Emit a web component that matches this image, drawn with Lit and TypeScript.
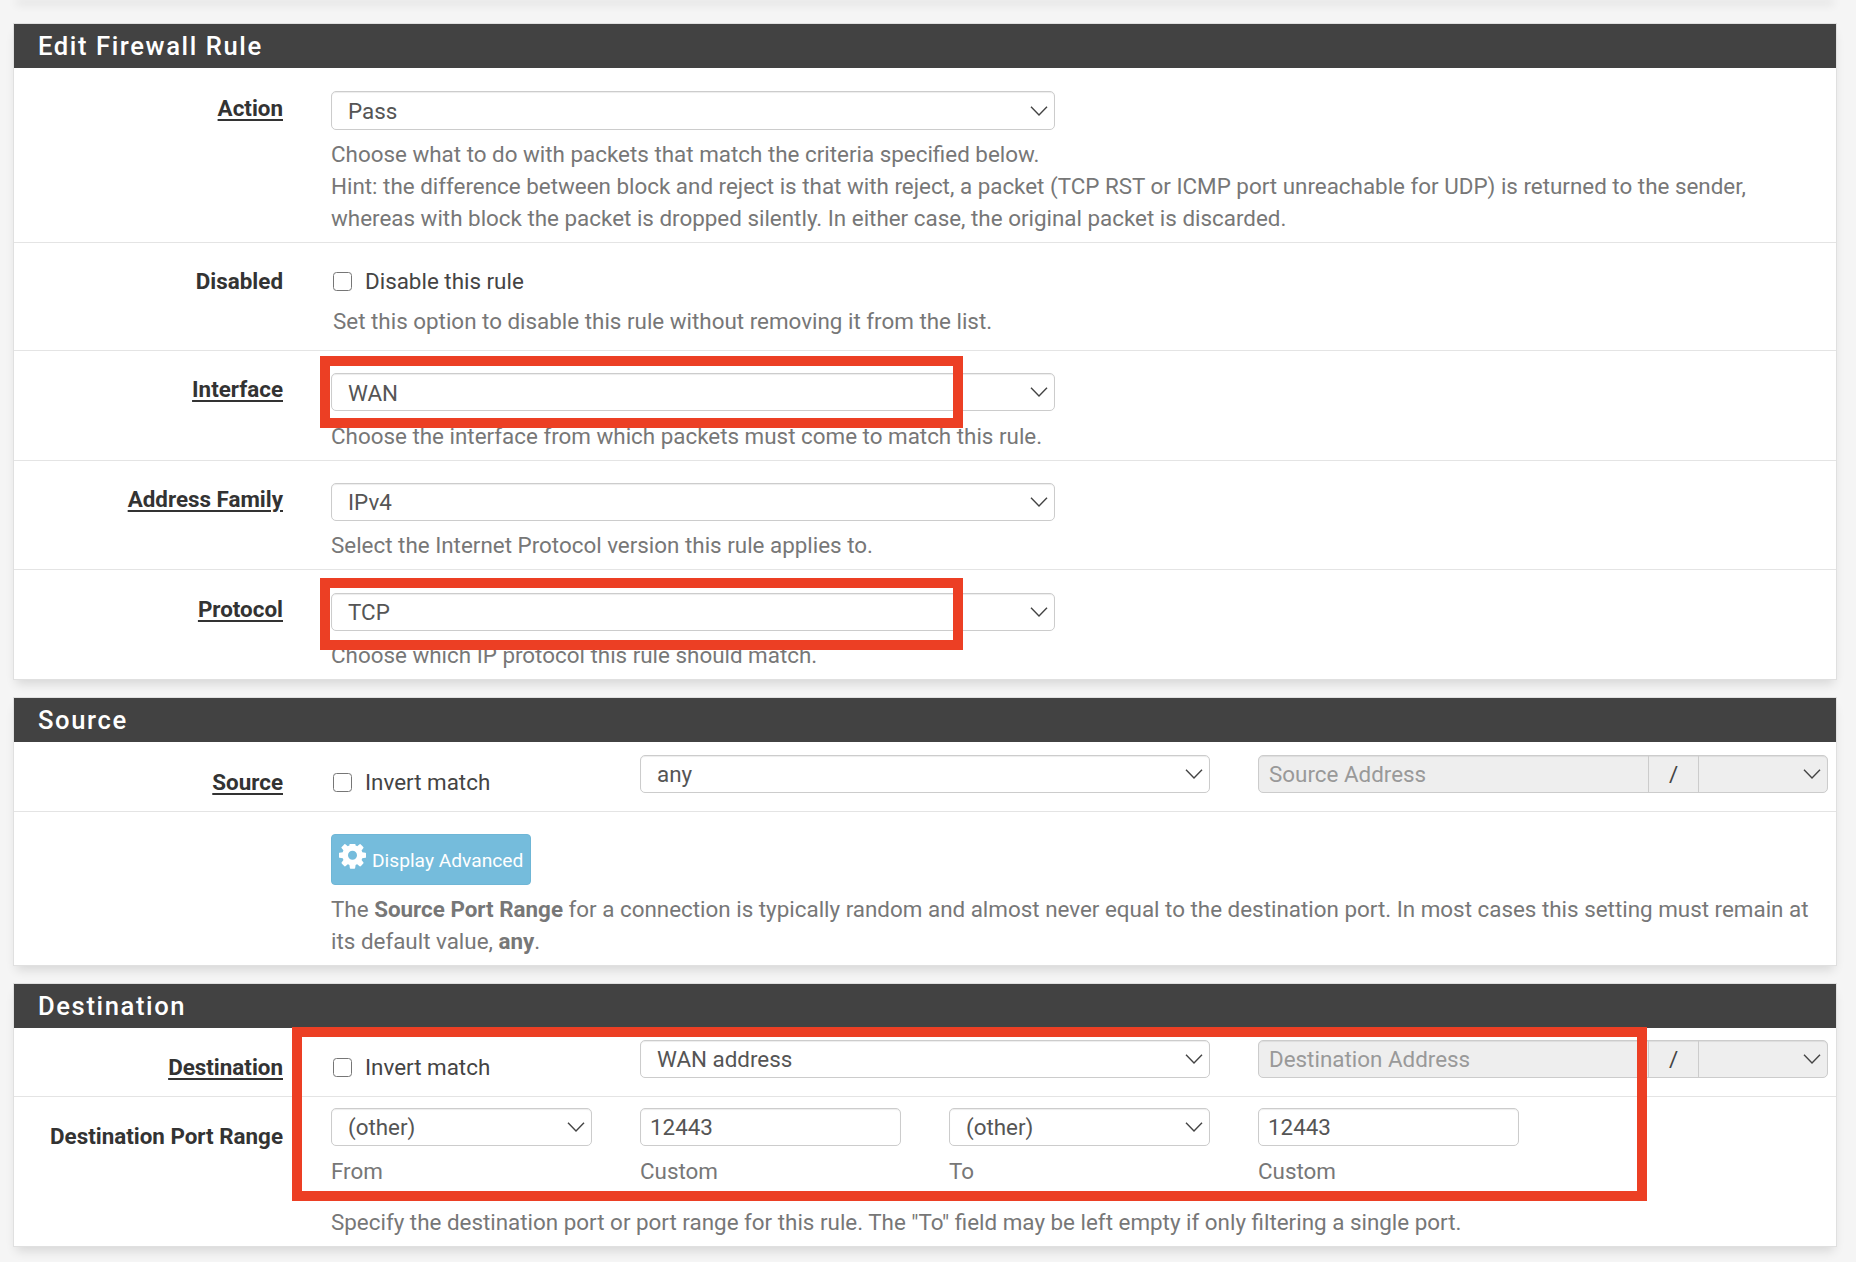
import { LitElement, html, css, svg } from "lit";
import { customElement } from "lit/decorators.js";

const chevron = html`<svg class="chev" viewBox="0 0 18 10" aria-hidden="true"><path d="M1 .8 L9 9 L17 .8" fill="none" stroke="#444" stroke-width="1.4"/></svg>`;
const gear = svg`<path fill-rule="evenodd" d="M1024 640q0-106-75-181t-181-75-181 75-75 181 75 181 181 75 181-75 75-181zm512-109v222q0 12-8 23t-20 13l-185 28q-19 54-39 91 35 50 107 138 10 12 10 25t-9 23q-27 37-99 108t-94 71q-12 0-26-9l-138-108q-44 23-91 38-16 136-29 186-7 28-36 28h-222q-14 0-24.5-8.5t-11.5-21.5l-28-184q-49-16-90-37l-141 107q-10 9-25 9-14 0-25-11-126-114-165-168-7-10-7-23 0-12 8-23 15-21 51-66.5t54-70.5q-27-50-41-99l-183-27q-13-2-21-12.5t-8-23.5v-222q0-12 8-23t19-13l186-28q14-46 39-92-40-57-107-138-10-12-10-24 0-10 9-23 26-36 98.5-107.5t94.5-71.5q13 0 26 10l138 107q44-23 91-38 16-136 29-186 7-28 36-28h222q14 0 24.5 8.5t11.5 21.5l28 184q49 16 90 37l142-107q9-9 24-9 13 0 25 10 129 119 165 170 7 8 7 22 0 12-8 23-15 21-51 66.5t-54 70.5q26 50 41 98l183 28q13 2 21 12.5t8 23.5z" fill="#fff"/>`;

@customElement("app-root")
export class AppRoot extends LitElement {
  static styles = css`
    :host {
      display: block;
      position: relative;
      width: 1856px;
      height: 1262px;
      overflow: hidden;
      background: #f5f5f5;
      font-family: Roboto, "Liberation Sans", sans-serif;
      font-size: 22.4px;
      line-height: 32px;
      color: #777;
    }
    .page { padding: 23px 19px 0 13px; display: flex; flex-direction: column; gap: 17px; }
    .ghost { height: 10px; margin-top: -33px; margin-bottom: 6px; background: #fff; box-shadow: 0 7px 10px -3px rgba(0,0,0,.12); }
    .panel { background: #fff; border: 1px solid #e0e0e0; box-shadow: 0 7px 10px -3px rgba(0,0,0,.12); }
    .head {
      height: 44px; background: #424242; color: #fff; padding-left: 24px;
      font-size: 25.6px; font-weight: 500; letter-spacing: 1.6px; line-height: 44px;
    }
    .row {
      display: grid; grid-template-columns: 269px 1fr; column-gap: 48px;
      padding-right: 8px; border-bottom: 1px solid #e4e4e4;
    }
    .row:last-child { border-bottom: 0; }
    .label { text-align: right; color: #333; font-weight: 700; }
    .label.u { text-decoration: underline; text-underline-offset: 3px; }
    .field { min-width: 0; }
    .select, .input {
      box-sizing: border-box; height: 38px; width: 100%; background: #fff;
      border: 1px solid #ccc; border-radius: 5px; color: #555; line-height: 36px;
      box-shadow: inset 0 1px 1px rgba(0,0,0,.075);
      display: flex; align-items: center; justify-content: space-between; white-space: nowrap;
    }
    .select { padding: 0 6px 0 16px; }
    .r-action .select span, .r-if .select span { padding-top: 1px; }
    .input { padding: 0 9px; }
    .chev { width: 18px; height: 10px; flex: none; }
    .wide { width: 724px; }
    .check { display: flex; align-items: center; gap: 13px; padding-left: 2px; color: #444; }
    .box { box-sizing: border-box; width: 19px; height: 19px; border: 1.5px solid #767676; border-radius: 3.5px; background: #fff; }
    .grid5 { display: grid; grid-template-columns: repeat(5, 261px); column-gap: 48px; }
    .span2 { grid-column: span 2; }
    .group { display: flex; height: 38px; box-sizing: border-box; border: 1px solid #ccc; border-radius: 5px; background: #eee; box-shadow: inset 0 1px 1px rgba(0,0,0,.075); }
    .group .ph { width: 390px; padding-left: 10px; box-sizing: border-box; color: #999; line-height: 36px; border-right: 1px solid #ccc; }
    .group .slash { width: 49px; text-align: center; color: #444; line-height: 36px; border-right: 1px solid #ccc; }
    .group .end { flex: 1; display: flex; align-items: center; justify-content: flex-end; padding-right: 6px; }
    .cap { color: #777; margin-top: 9px; }
    b { font-weight: 700; }
    .btn {
      display: inline-flex; box-sizing: border-box; width: 200px; height: 51px; background: #75bcdc;
      border: 1px solid #6fb6d6; border-radius: 4px; color: #fff; font-size: 19.2px; align-items: center;
      padding-left: 7px; gap: 6px; vertical-align: top;
    }
    .btn svg { width: 27px; height: 27px; flex: none; margin-top: -5px; }
    .btn span { line-height: 32px; margin-top: 2px; white-space: nowrap; }

    .r-action { padding: 23px 8px 8px 0; }
    .r-action .label { padding-top: 1px; }
    .r-action .select { height: 39px; }
    .r-action .help { margin-top: 8px; }
    .r-disabled { padding: 22px 8px 13px 0; }
    .r-disabled .help { margin-top: 8px; padding-left: 2px; }
    .r-if { padding: 22px 8px 8px 0; }
    .r-if .help { margin-top: 9px; }
    .r-af { padding: 22px 8px 8px 0; }
    .r-af .help, .r-pr .help { margin-top: 8px; }
    .r-pr { padding: 23px 8px 8px 0; }
    .r-src { padding: 13px 8px 13px 0; }
    .r-dst { padding: 12px 8px 13px 0; }
    .r-src .label, .r-src .check, .r-dst .label, .r-dst .check { padding-top: 11px; }
    .r-adv { padding: 22px 8px 8px 0; }
    .r-adv .help { margin-top: 8px; }
    .r-dp { padding: 11px 8px 8px 0; }
    .r-dp .label { padding-top: 12px; }
    .r-dp .help { margin-top: 19px; }

    .mark { position: absolute; box-sizing: border-box; border: 10px solid #ec3f24; pointer-events: none; }
    .m1 { left: 320px; top: 356px; width: 643px; height: 72px; }
    .m2 { left: 320px; top: 578px; width: 643px; height: 72px; }
    .m3 { left: 292px; top: 1027px; width: 1355px; height: 174px; }
  `;

  private sel(text: string) {
    return html`<div class="select"><span>${text}</span>${chevron}</div>`;
  }

  private group(ph: string) {
    return html`<div class="group span2"><div class="ph">${ph}</div><div class="slash">/</div><div class="end">${chevron}</div></div>`;
  }

  render() {
    return html`
      <div class="page">
        <div class="ghost"></div>
        <section class="panel">
          <div class="head">Edit Firewall Rule</div>
          <div class="row r-action">
            <div class="label u">Action</div>
            <div class="field">
              <div class="wide">${this.sel("Pass")}</div>
              <div class="help">Choose what to do with packets that match the criteria specified below.<br>Hint: the difference between block and reject is that with reject, a packet (TCP RST or ICMP port unreachable for UDP) is returned to the sender,<br>whereas with block the packet is dropped silently. In either case, the original packet is discarded.</div>
            </div>
          </div>
          <div class="row r-disabled">
            <div class="label">Disabled</div>
            <div class="field">
              <div class="check"><span class="box"></span>Disable this rule</div>
              <div class="help">Set this option to disable this rule without removing it from the list.</div>
            </div>
          </div>
          <div class="row r-if">
            <div class="label u">Interface</div>
            <div class="field">
              <div class="wide">${this.sel("WAN")}</div>
              <div class="help">Choose the interface from which packets must come to match this rule.</div>
            </div>
          </div>
          <div class="row r-af">
            <div class="label u">Address Family</div>
            <div class="field">
              <div class="wide">${this.sel("IPv4")}</div>
              <div class="help">Select the Internet Protocol version this rule applies to.</div>
            </div>
          </div>
          <div class="row r-pr">
            <div class="label u">Protocol</div>
            <div class="field">
              <div class="wide">${this.sel("TCP")}</div>
              <div class="help">Choose which IP protocol this rule should match.</div>
            </div>
          </div>
        </section>

        <section class="panel">
          <div class="head">Source</div>
          <div class="row r-src">
            <div class="label u">Source</div>
            <div class="grid5">
              <div class="check"><span class="box"></span>Invert match</div>
              <div class="span2">${this.sel("any")}</div>
              ${this.group("Source Address")}
            </div>
          </div>
          <div class="row r-adv">
            <div class="label"></div>
            <div class="field">
              <div class="btn"><svg viewBox="0 0 1536 1536" aria-hidden="true">${gear}</svg><span>Display Advanced</span></div>
              <div class="help">The <b>Source Port Range</b> for a connection is typically random and almost never equal to the destination port. In most cases this setting must remain at<br>its default value, <b>any</b>.</div>
            </div>
          </div>
        </section>

        <section class="panel">
          <div class="head">Destination</div>
          <div class="row r-dst">
            <div class="label u">Destination</div>
            <div class="grid5">
              <div class="check"><span class="box"></span>Invert match</div>
              <div class="span2">${this.sel("WAN address")}</div>
              ${this.group("Destination Address")}
            </div>
          </div>
          <div class="row r-dp">
            <div class="label">Destination Port Range</div>
            <div class="field">
              <div class="grid5">
                <div>${this.sel("(other)")}<div class="cap">From</div></div>
                <div><div class="input">12443</div><div class="cap">Custom</div></div>
                <div>${this.sel("(other)")}<div class="cap">To</div></div>
                <div><div class="input">12443</div><div class="cap">Custom</div></div>
              </div>
              <div class="help">Specify the destination port or port range for this rule. The "To" field may be left empty if only filtering a single port.</div>
            </div>
          </div>
        </section>
      </div>
      <div class="mark m1"></div>
      <div class="mark m2"></div>
      <div class="mark m3"></div>
    `;
  }
}
